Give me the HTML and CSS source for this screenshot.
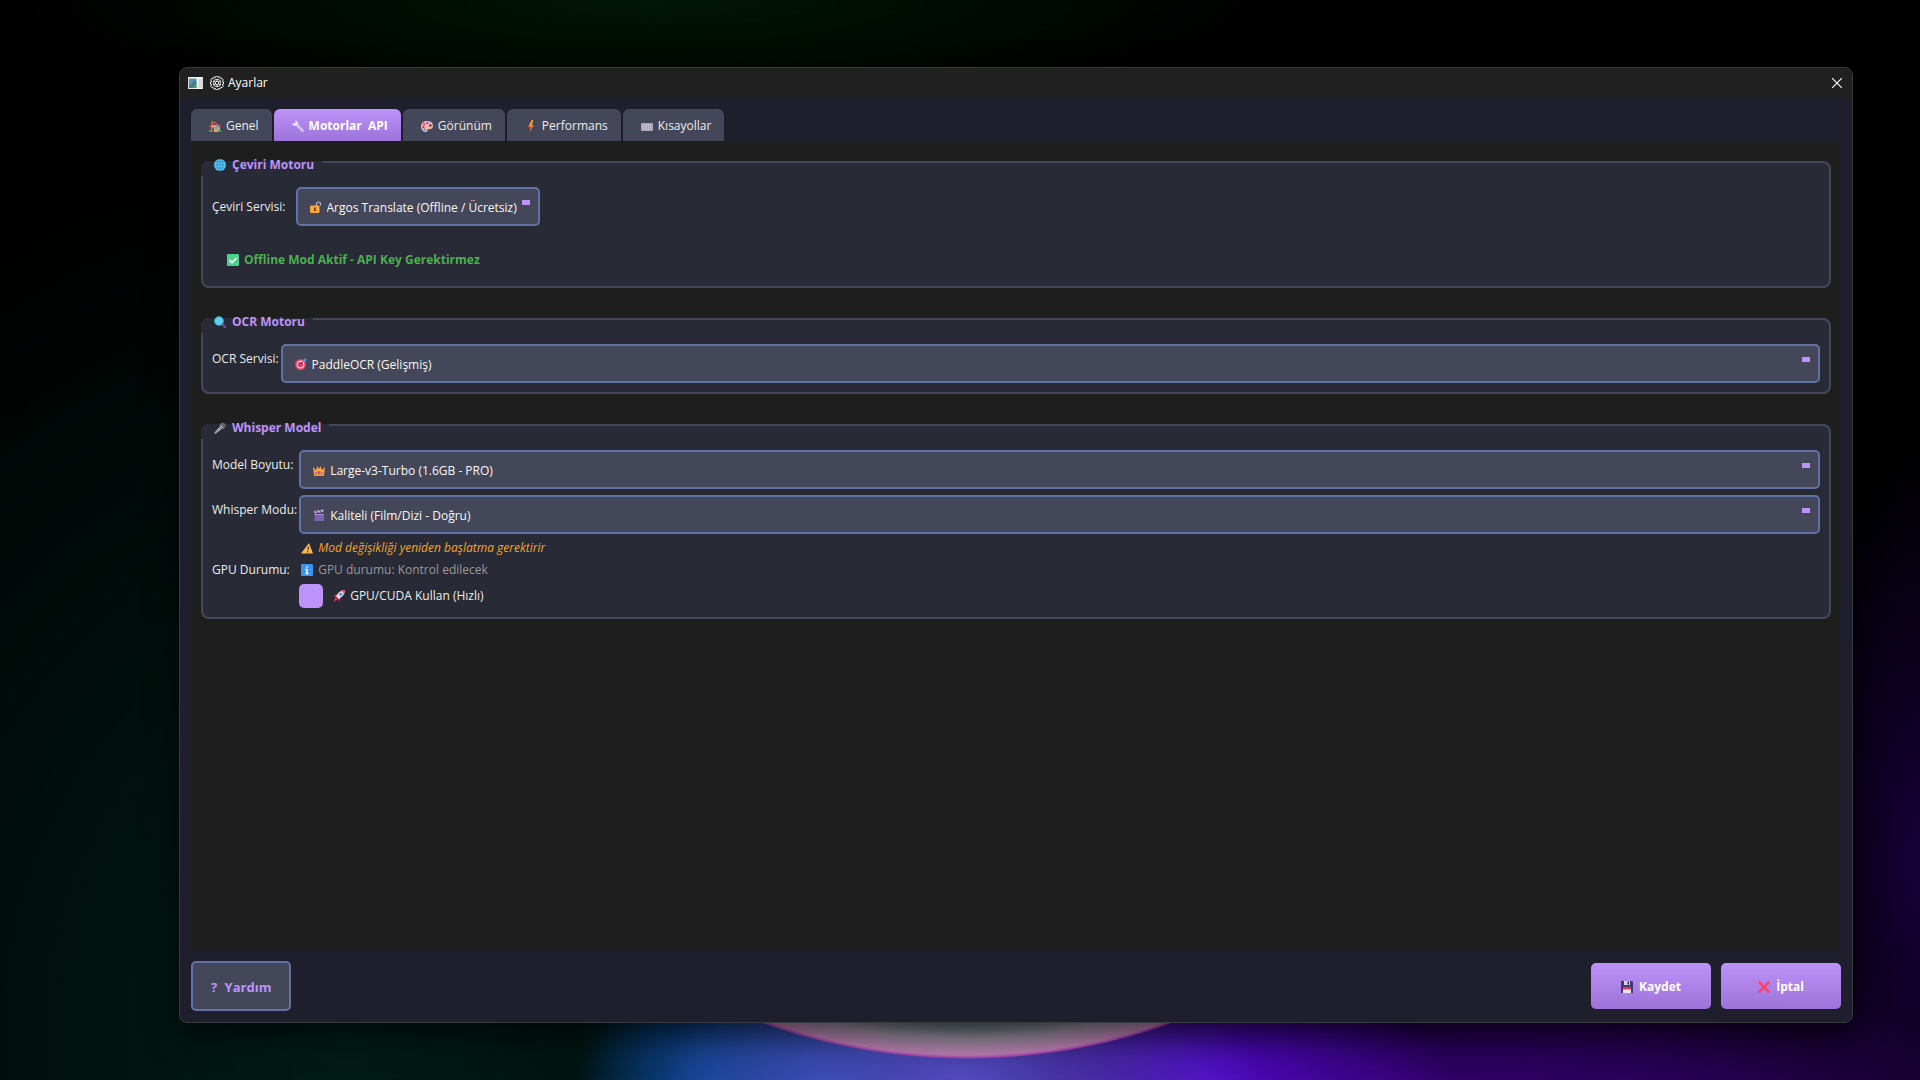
FILE: index.html
```
<!DOCTYPE html>
<html lang="tr">
<head>
    <meta charset="UTF-8">
    <meta name="viewport" content="width=device-width, initial-scale=1.0">
    <title>Ayarlar</title>
    <link rel="stylesheet" href="styles.css">
</head>
<body>
    <main class="window">
        <header class="titlebar">
            <svg class="app-icon" viewBox="0 0 16 13">
                <rect width="16" height="13" fill="#f4f4f4"/>
                <rect x="1" y="2" width="8" height="10" fill="#3b7f8c"/>
                <path d="M1 2h8L1 10z" fill="#5b8fb5"/>
                <path d="M4 12l5-6v6z" fill="#4e9b6c"/>
                <rect x="11" y="2" width="4" height="10" fill="#d5d9da"/>
            </svg>
            <svg class="gear" viewBox="0 0 14 14" fill="none" stroke="#fff">
                <path d="M5.500 1.500a1.500 1.500 0 0 1 3 0 1.500 1.500 0 0 1 2.500 1.200 1.500 1.500 0 0 1 1.200 2.800 1.500 1.500 0 0 1 0 3 1.500 1.500 0 0 1-1.200 2.800 1.500 1.500 0 0 1-2.500 1.200 1.500 1.500 0 0 1-3 0A1.500 1.500 0 0 1 3 11.300a1.500 1.500 0 0 1-1.200-2.800 1.500 1.500 0 0 1 0-3A1.500 1.500 0 0 1 3 2.700a1.500 1.500 0 0 1 2.500-1.200z"/>
                <circle cx="7" cy="7" r="3.800" stroke-width=".8"/>
                <circle cx="7" cy="7" r="1.800"/>
                <path d="M7 3v2M7 9v2M3.500 5l1.800 1M8.700 8l1.800 1M3.500 9l1.800-1M8.700 6l1.800-1" stroke-width=".8"/>
            </svg>
            <h1>Ayarlar</h1>
            <button class="close" type="button" aria-label="Kapat">
                <svg viewBox="0 0 10 10" stroke="#fff" fill="none"><path d="M0 0l10 10M10 0L0 10" stroke-width="1.100"/></svg>
            </button>
        </header>

        <nav class="tabs">
            <button class="tab" type="button">
                <svg class="emoji" viewBox="0 0 12 12">
                    <path d="M2 5h9v7H2z" fill="#e8a06a"/>
                    <path d="M0 6.500L5.500 1 12 7l-1 1-5.500-5L1 7.500z" fill="#d84a3a"/>
                    <path d="M2 1h2v3L2 5z" fill="#b5663c"/>
                    <path d="M6 6h3v3H6z" fill="#39b7ee"/>
                    <path d="M2.500 7.500h2.500V12H2.500z" fill="#8c5136"/>
                    <path d="M0 10h2v2H0zM9 10h3v2H9z" fill="#4e9d5b"/>
                </svg>
                Genel
            </button>
            <button class="tab active" type="button">
                <svg class="emoji" viewBox="0 0 12 12">
                    <path d="M4 4l6.500 6.500" stroke="#cfcad8" stroke-width="2.600" stroke-linecap="round"/>
                    <path d="M3 .5L3.500 3 .5 3.300A2.800 2.800 0 1 0 3 .5z" fill="#e4e0ea"/>
                </svg>
                <span>Motorlar&nbsp; API</span>
            </button>
            <button class="tab" type="button">
                <svg class="emoji" viewBox="0 0 12 12">
                    <path d="M6 1C2.500 1 0 3 0 6.500S2.500 12 5 12c1.500 0 1-1.500 1.500-2.300S12 10 12 6 9 1 6 1z" fill="#f5b8a8"/>
                    <circle cx="3" cy="4" r="1.200" fill="#e0409c"/>
                    <circle cx="6.500" cy="3" r="1.200" fill="#a257e0"/>
                    <circle cx="2.300" cy="7" r="1.200" fill="#e53b4e"/>
                    <circle cx="3.800" cy="9.700" r="1.200" fill="#39a5e8"/>
                    <circle cx="9.300" cy="5.500" r="1.300" fill="#45475a"/>
                </svg>
                Görünüm
            </button>
            <button class="tab" type="button">
                <svg class="emoji" viewBox="0 0 12 12">
                    <path d="M7 0L3 7h2.500L4.500 12 9 5H6.500L8 0z" fill="#f47a35"/>
                    <path d="M7 0L4.500 4.500l2.500.500L8 0z" fill="#fbb03c"/>
                </svg>
                Performans
            </button>
            <button class="tab" type="button">
                <svg class="emoji" viewBox="0 0 12 12">
                    <rect y="3" width="12" height="8" rx="1" fill="#aea8b8"/>
                    <path d="M1 5h10M1 7h10M3 9h6" stroke="#dcd8e2" stroke-dasharray="1 1"/>
                </svg>
                Kısayollar
            </button>
        </nav>

        <section class="page">
            <fieldset class="group">
                <legend>
                    <svg class="emoji" viewBox="0 0 12 12">
                        <circle cx="6" cy="6" r="6" fill="#5cccfa"/>
                        <path d="M0 6h12M6 0v12M1.500 3h9M1.500 9h9M6 0C2 3 2 9 6 12M6 0c4 3 4 9 0 12" stroke="#1c6fa8" stroke-width=".5" fill="none"/>
                    </svg>
                    Çeviri Motoru
                </legend>
                <div class="service">
                    <label for="translator">Çeviri Servisi:</label>
                    <div class="combo">
                        <svg class="emoji" viewBox="0 0 12 12">
                            <path d="M6.500 5V3a2 2 0 0 1 4 0v1.500" fill="none" stroke="#b9b5c4" stroke-width="1.200"/>
                            <rect y="4.500" width="9.500" height="7.500" rx="1" fill="#fba63c"/>
                            <path d="M4 6.500h1.800v3.500H4z" fill="#6b3f22"/>
                        </svg>
                        <select id="translator"><option>Argos Translate (Offline / Ücretsiz)</option></select>
                    </div>
                </div>
                <p class="offline">
                    <svg class="emoji" viewBox="0 0 12 12">
                        <rect width="12" height="12" rx="1" fill="#4bd18b"/>
                        <path d="M2.500 6l2.500 2.500L9.500 4" fill="none" stroke="#fff" stroke-width="1.600"/>
                    </svg>
                    Offline Mod Aktif - API Key Gerektirmez
                </p>
            </fieldset>

            <fieldset class="group">
                <legend>
                    <svg class="emoji" viewBox="0 0 12 12">
                        <path d="M8 8l3 3" stroke="#7b4a96" stroke-width="2.400" stroke-linecap="round"/>
                        <circle cx="5" cy="5" r="4.600" fill="#5fd0f2"/>
                        <circle cx="5" cy="5" r="4.200" fill="none" stroke="#3fa6cf" stroke-width=".8"/>
                    </svg>
                    OCR Motoru
                </legend>
                <div class="form">
                    <label for="ocr">OCR Servisi:</label>
                    <div class="combo">
                        <svg class="emoji" viewBox="0 0 12 12">
                            <circle cx="5.500" cy="6.500" r="5.500" fill="#ee3a63"/>
                            <circle cx="5.500" cy="6.500" r="3.300" fill="none" stroke="#f7d5dd" stroke-width="1.200"/>
                            <path d="M5.500 6.500L9 3" stroke="#45475a"/>
                            <path d="M8 4l.500-2.500L10.500 0v1.500H12L10.500 3.500z" fill="#35a3e8"/>
                        </svg>
                        <select id="ocr"><option>PaddleOCR (Gelişmiş)</option></select>
                    </div>
                </div>
            </fieldset>

            <fieldset class="group">
                <legend>
                    <svg class="emoji" viewBox="0 0 12 12">
                        <path d="M0 11l6-7 2.500 2.500L1.500 12z" fill="#a29da8"/>
                        <circle cx="8.800" cy="3.500" r="2.800" fill="#6a6570"/>
                        <path d="M6 3l3.500 3.500" stroke="#cbc7d0"/>
                    </svg>
                    Whisper Model
                </legend>
                <div class="form">
                    <label for="model">Model Boyutu:</label>
                    <div class="combo">
                        <svg class="emoji" viewBox="0 0 12 12">
                            <path d="M0 3l3 3 1.500-4L6 5l1.500-3L9 6l3-3-1 9H1z" fill="#f9a13a"/>
                            <path d="M1 10.500h10" stroke="#e0792a"/>
                            <circle cx="6" cy="8.500" r="1.200" fill="#4a6fe0"/>
                            <circle cx="3.200" cy="8.500" r=".8" fill="#e2405a"/>
                            <circle cx="8.800" cy="8.500" r=".8" fill="#e2405a"/>
                        </svg>
                        <select id="model"><option>Large-v3-Turbo (1.6GB - PRO)</option></select>
                    </div>
                    <label for="mode">Whisper Modu:</label>
                    <div class="combo">
                        <svg class="emoji" viewBox="0 0 12 12">
                            <path d="M1.500 5h9.500v7H1.500z" fill="#7d64ae"/>
                            <path d="M1 2l9.500-1.500v2.300L1.500 4.500z" fill="#b9a4dd"/>
                            <path d="M3 2l1.500 1.700M6.500 1.500L8 3" stroke="#45375f"/>
                            <path d="M1.500 5.500H11" stroke="#a48fd0"/>
                        </svg>
                        <select id="mode"><option>Kaliteli (Film/Dizi - Doğru)</option></select>
                    </div>
                    <p class="note warning">
                        <svg class="emoji" viewBox="0 0 12 12">
                            <path d="M8 1l4 10.500H0z" fill="#fbb950"/>
                            <path d="M7.500 4.500L7 8M6.800 9l-.2 1.500" stroke="#4a3320" stroke-width="1.300"/>
                        </svg>
                        Mod değişikliği yeniden başlatma gerektirir
                    </p>
                    <span class="caption">GPU Durumu:</span>
                    <p class="note status">
                        <svg class="emoji" viewBox="0 0 12 12">
                            <rect width="12" height="12" rx="1" fill="#3d94ee"/>
                            <path d="M6 2v1.700M4.500 5.500H6V9M4.500 9.500h3" stroke="#fff" stroke-width="1.300" fill="none"/>
                        </svg>
                        GPU durumu: Kontrol edilecek
                    </p>
                    <label class="check">
                        <input type="checkbox" checked>
                        <svg class="emoji" viewBox="0 0 12 12">
                            <path d="M3.500 4L.5 6.500l3.500.5zM8 8.500l-2.500 3L5 8z" fill="#e0355c"/>
                            <path d="M12 0C8 0 5 2.500 3 6.500L5.500 9C9.500 7 12 4 12 0z" fill="#dfdbe6"/>
                            <path d="M12 0L8.500.8l2.700 2.700z" fill="#ee3a63"/>
                            <circle cx="7.800" cy="4.200" r="1.300" fill="#3b7fd0"/>
                            <path d="M2.800 7.500L4.500 9.200.3 12z" fill="#f0455a"/>
                        </svg>
                        GPU/CUDA Kullan (Hızlı)
                    </label>
                </div>
            </fieldset>
        </section>

        <footer class="actions">
            <button class="help" type="button"><span>?</span> Yardım</button>
            <button class="primary" type="button">
                <svg class="emoji" viewBox="0 0 12 12">
                    <path d="M0 0h11l1 1v11H0z" fill="#42397a"/>
                    <path d="M3 0h6v4H3z" fill="#d9d5e2"/>
                    <path d="M6.500 .5h1.500v3H6.500z" fill="#2e2858"/>
                    <path d="M2 6h8v6H2z" fill="#e9e4ee"/>
                    <path d="M2 6h8v2.500H2z" fill="#e0355c"/>
                </svg>
                Kaydet
            </button>
            <button class="primary" type="button">
                <svg class="emoji" viewBox="0 0 12 12">
                    <path d="M1.500 1.500l9 9M10.500 1.500l-9 9" stroke="#f8456b" stroke-width="2.600" stroke-linecap="round"/>
                </svg>
                İptal
            </button>
        </footer>
    </main>
</body>
</html>
```
FILE: styles.css
```
*{
    box-sizing: border-box;
    padding: 0;
    margin: 0;
}
body{
    min-height: 100vh;
    padding: 67px 67px 57px 179px;
    display: flex;
    font-family: "Open Sans", "Noto Sans", sans-serif;
    font-size: 12px;
    line-height: 16px;
    color: #ececea;
    background:
        radial-gradient(ellipse 498px 400px at 967px 659px, #5c6f72 91%, #988a9c 95%, #b87bb0 99%, #b048b0 99.6%, transparent 100%),
        radial-gradient(ellipse 300px 130px at 50% 100%, #5448c0, transparent),
        radial-gradient(ellipse 240px 130px at 63% 100%, #5008c8, transparent),
        radial-gradient(ellipse 240px 160px at 43% 100%, #2050a8, transparent),
        radial-gradient(ellipse 140px 160px at 37% 100%, #003c80, transparent),
        radial-gradient(ellipse 560px 200px at 74% 104%, #3c0080, transparent),
        radial-gradient(ellipse 400px 200px at 90% 104%, #1c0038, transparent),
        radial-gradient(ellipse 140px 420px at 100% 80%, #160038, transparent),
        radial-gradient(ellipse 760px 900px at 18% 95%, #001c16, transparent),
        radial-gradient(ellipse 640px 110px at 34% 0, #001606, transparent),
        #000;
}
button,select,input{
    font: inherit;
    color: inherit;
}
button{
    border: none;
    cursor: pointer;
}
.window{
    flex: 1;
    display: flex;
    flex-direction: column;
    background-color: #1f1e2d;
    border: 1px solid #3a3a3e;
    border-radius: 8px;
    box-shadow: 0 12px 32px rgba(0, 0, 0, 0.6);
    overflow: hidden;
}
.emoji{
    width: 12px;
    height: 12px;
    flex: none;
}

/* title bar */
.titlebar{
    height: 30px;
    padding: 0 10px 0 8px;
    display: flex;
    align-items: center;
    background-color: #202020;
}
.app-icon{
    width: 15px;
    height: 12px;
}
.gear{
    width: 14px;
    height: 14px;
    margin: 0 4px 0 7px;
}
.titlebar h1{
    font-size: 12px;
    font-weight: normal;
    color: #fff;
}
.close{
    margin-left: auto;
    width: 10px;
    height: 10px;
    background: none;
}
.close svg{
    display: block;
}

/* tabs */
.tabs{
    display: flex;
    gap: 2px;
    padding: 11px 11px 0;
}
.tab{
    height: 32px;
    padding: 2px 13px 0 18px;
    display: flex;
    align-items: center;
    gap: 5px;
    background-color: #44475a;
    border-radius: 6px 6px 0 0;
}
.tab.active{
    background: linear-gradient(#bd93f9, #9d72d9);
    color: #fff;
    font-weight: bold;
}

.page{
    flex: 1;
    margin: 0 12px;
    padding: 20px 9px;
    display: flex;
    flex-direction: column;
    gap: 30px;
    background-color: #1e1e1e;
}
.group{
    position: relative;
    padding: 24px 9px 9px;
    background-color: #282a36;
    border: 2px solid #44475a;
    border-radius: 8px;
}
/* the title covers the corner of the frame */
.group legend{
    position: absolute;
    top: -2px;
    left: -2px;
    height: 15px;
    padding: 0 8px 8px 13px;
    display: flex;
    align-items: center;
    gap: 6px;
    font-weight: bold;
    color: #bd93f9;
    background-color: #282a36;
    border-radius: 8px 0 0 0;
}
.service{
    display: flex;
    align-items: center;
    gap: 10px;
}
.form{
    display: grid;
    grid-template-columns: auto 1fr;
    column-gap: 2px;
    row-gap: 6px;
}
.form > label{
    padding-top: 7px;
}
.combo{
    position: relative;
}
.combo .emoji{
    position: absolute;
    top: 14px;
    left: 14px;
}
.combo select{
    display: block;
    width: 100%;
    height: 39px;
    padding: 2px 20px 0 29px;
    appearance: none;
    background: linear-gradient(#bd93f9, #bd93f9) no-repeat right 8px top 11px / 8px 5px #44475a;
    border: 2px solid #6272a4;
    border-radius: 5px;
    color: #f8f8f2;
}
.offline{
    display: flex;
    align-items: center;
    gap: 5px;
    margin: 26px 0 9px 15px;
    font-weight: bold;
    color: #4caf50;
}
.note{
    grid-column: 2;
    display: flex;
    align-items: center;
    gap: 5px;
    padding-left: 2px;
}
.warning{
    font-style: italic;
    color: #f5a623;
}
.status{
    color: #999;
}
.form > .check{
    grid-column: 2;
    display: flex;
    align-items: center;
    gap: 5px;
    padding: 0;
}
.check input{
    width: 24px;
    height: 24px;
    margin-right: 5px;
    appearance: none;
    background-color: #bd93f9;
    border-radius: 5px;
}

/* bottom buttons */
.actions{
    display: flex;
    align-items: center;
    gap: 10px;
    padding: 11px;
}
.help{
    height: 50px;
    padding: 1px 18px 0;
    margin-right: auto;
    background-color: #44475a;
    border: 2px solid #6272a4;
    border-radius: 5px;
    color: #bd93f9;
    font-size: 13px;
    font-weight: bold;
}
.help span{
    margin-right: 4px;
}
.primary{
    width: 120px;
    height: 46px;
    padding-top: 2px;
    display: flex;
    align-items: center;
    justify-content: center;
    gap: 6px;
    background: linear-gradient(#bd93f9, #9d72d9);
    border-radius: 5px;
    color: #fff;
    font-weight: bold;
}
```
